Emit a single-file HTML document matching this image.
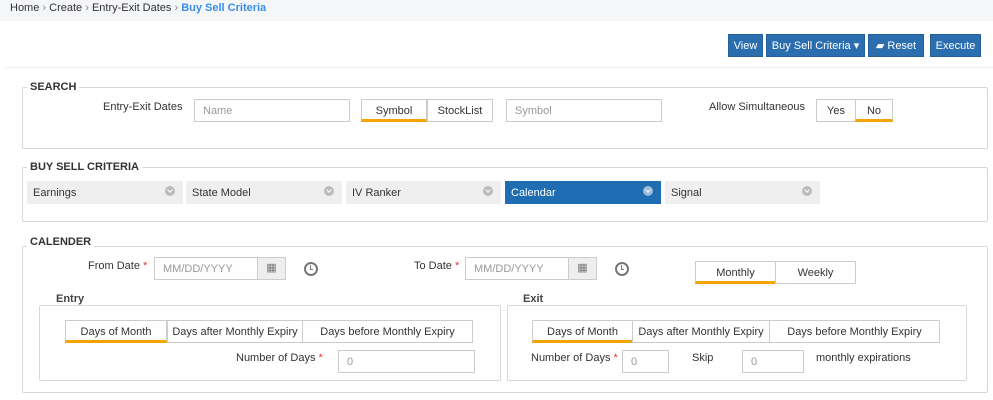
<!DOCTYPE html>
<html><head><style>
*{box-sizing:border-box;margin:0;padding:0}
body{width:993px;height:400px;background:#fff;font-family:"Liberation Sans",Arial,sans-serif;font-size:11px;color:#333;position:relative;overflow:hidden}
.a{position:absolute}
.bc{left:0;top:0;width:993px;height:21px;background:#f5f6f8}
.btn{background:#2a6eb0;color:#fff;font-size:11px;height:23px;line-height:23px;text-align:center;border:1px solid #245f98}
.fs{border:1px solid #d8d8d8;border-radius:2px}
.lg{background:#fff;font-weight:bold;font-size:11px;color:#333;padding:0 3px}
.inp{border:1px solid #ccc;height:23px;line-height:23px;padding-left:8px;color:#999;background:#fff}
.tg{border:1px solid #ccc;height:23px;line-height:22px;text-align:center;color:#333;background:#fff}
.on{border-bottom:3px solid #f5a300}
.tab{background:#efefef;height:23px;line-height:24px;padding-left:6px;color:#333}
.tab i{position:absolute;right:8px;top:5px;width:10px;height:10px;border-radius:50%;background:#bbb}
.tab i:after{content:"";position:absolute;left:3px;top:2px;width:3px;height:3px;border-right:1px solid #fff;border-bottom:1px solid #fff;transform:rotate(45deg)}
.sel{background:#1f6db2;color:#fff}
.sel i{background:#9bbad8}
.st{color:#e33}
.addon{background:#eee;border:1px solid #ccc;height:23px;width:29px}
.clk{width:14px;height:14px;border:2px solid #777;border-radius:50%}
.clk:after{content:"";position:absolute;left:4px;top:1px;width:2px;height:4px;border-left:1.5px solid #777;border-bottom:1.5px solid #777}
</style></head><body>
<div class="a bc"></div>
<div class="a" style="left:10px;top:1px;line-height:14px">Home <span style="color:#888">›</span> Create <span style="color:#888">›</span> Entry-Exit Dates <span style="color:#888">›</span> <b style="color:#3a8ee6;font-weight:bold">Buy Sell Criteria</b></div>

<div class="a btn" style="left:728px;top:34px;width:35px">View</div>
<div class="a btn" style="left:766px;top:34px;width:99px">Buy Sell Criteria ▾</div>
<div class="a btn" style="left:868px;top:34px;width:56px">▰ Reset</div>
<div class="a btn" style="left:930px;top:34px;width:51px">Execute</div>
<div class="a" style="left:6px;top:67px;width:987px;height:1px;background:#eee"></div>

<!-- SEARCH -->
<div class="a fs" style="left:22px;top:87px;width:966px;height:62px"></div>
<div class="a lg" style="left:27px;top:81px">SEARCH</div>
<div class="a" style="left:103px;top:101px">Entry-Exit Dates</div>
<div class="a inp" style="left:194px;top:99px;width:156px">Name</div>
<div class="a tg on" style="left:361px;top:99px;width:66px">Symbol</div>
<div class="a tg" style="left:427px;top:99px;width:66px">StockList</div>
<div class="a inp" style="left:506px;top:99px;width:156px">Symbol</div>
<div class="a" style="left:709px;top:101px">Allow Simultaneous</div>
<div class="a tg" style="left:816px;top:99px;width:40px">Yes</div>
<div class="a tg on" style="left:855px;top:99px;width:38px">No</div>

<!-- BUY SELL -->
<div class="a fs" style="left:22px;top:167px;width:966px;height:55px"></div>
<div class="a lg" style="left:27px;top:161px">BUY SELL CRITERIA</div>
<div class="a tab" style="left:27px;top:181px;width:156px">Earnings<i></i></div>
<div class="a tab" style="left:186px;top:181px;width:156px">State Model<i></i></div>
<div class="a tab" style="left:346px;top:181px;width:155px">IV Ranker<i></i></div>
<div class="a tab sel" style="left:505px;top:181px;width:156px">Calendar<i></i></div>
<div class="a tab" style="left:665px;top:181px;width:155px">Signal<i></i></div>

<!-- CALENDER -->
<div class="a fs" style="left:22px;top:246px;width:966px;height:147px"></div>
<div class="a lg" style="left:27px;top:236px">CALENDER</div>
<div class="a" style="left:88px;top:260px">From Date <span class="st">*</span></div>
<div class="a inp" style="left:154px;top:257px;width:104px">MM/DD/YYYY</div>
<div class="a addon" style="left:257px;top:257px;color:#777;text-align:center;line-height:21px">▦</div>
<div class="a clk" style="left:304px;top:262px"></div>
<div class="a" style="left:414px;top:260px">To Date <span class="st">*</span></div>
<div class="a inp" style="left:465px;top:257px;width:104px">MM/DD/YYYY</div>
<div class="a addon" style="left:568px;top:257px;color:#777;text-align:center;line-height:21px">▦</div>
<div class="a clk" style="left:615px;top:262px"></div>
<div class="a tg on" style="left:695px;top:261px;width:81px">Monthly</div>
<div class="a tg" style="left:775px;top:261px;width:81px">Weekly</div>

<div class="a" style="left:56px;top:293px;font-weight:bold;color:#444">Entry</div>
<div class="a fs" style="left:39px;top:305px;width:462px;height:76px"></div>
<div class="a tg on" style="left:65px;top:320px;width:102px">Days of Month</div>
<div class="a tg" style="left:167px;top:320px;width:136px">Days after Monthly Expiry</div>
<div class="a tg" style="left:302px;top:320px;width:171px">Days before Monthly Expiry</div>
<div class="a" style="left:236px;top:352px">Number of Days <span class="st">*</span></div>
<div class="a inp" style="left:338px;top:350px;width:137px">0</div>

<div class="a" style="left:523px;top:293px;font-weight:bold;color:#444">Exit</div>
<div class="a fs" style="left:507px;top:305px;width:460px;height:76px"></div>
<div class="a tg on" style="left:532px;top:320px;width:101px">Days of Month</div>
<div class="a tg" style="left:632px;top:320px;width:138px">Days after Monthly Expiry</div>
<div class="a tg" style="left:769px;top:320px;width:171px">Days before Monthly Expiry</div>
<div class="a" style="left:531px;top:352px">Number of Days <span class="st">*</span></div>
<div class="a inp" style="left:622px;top:350px;width:47px">0</div>
<div class="a" style="left:692px;top:352px">Skip</div>
<div class="a inp" style="left:742px;top:350px;width:62px">0</div>
<div class="a" style="left:816px;top:352px">monthly expirations</div>
</body></html>
